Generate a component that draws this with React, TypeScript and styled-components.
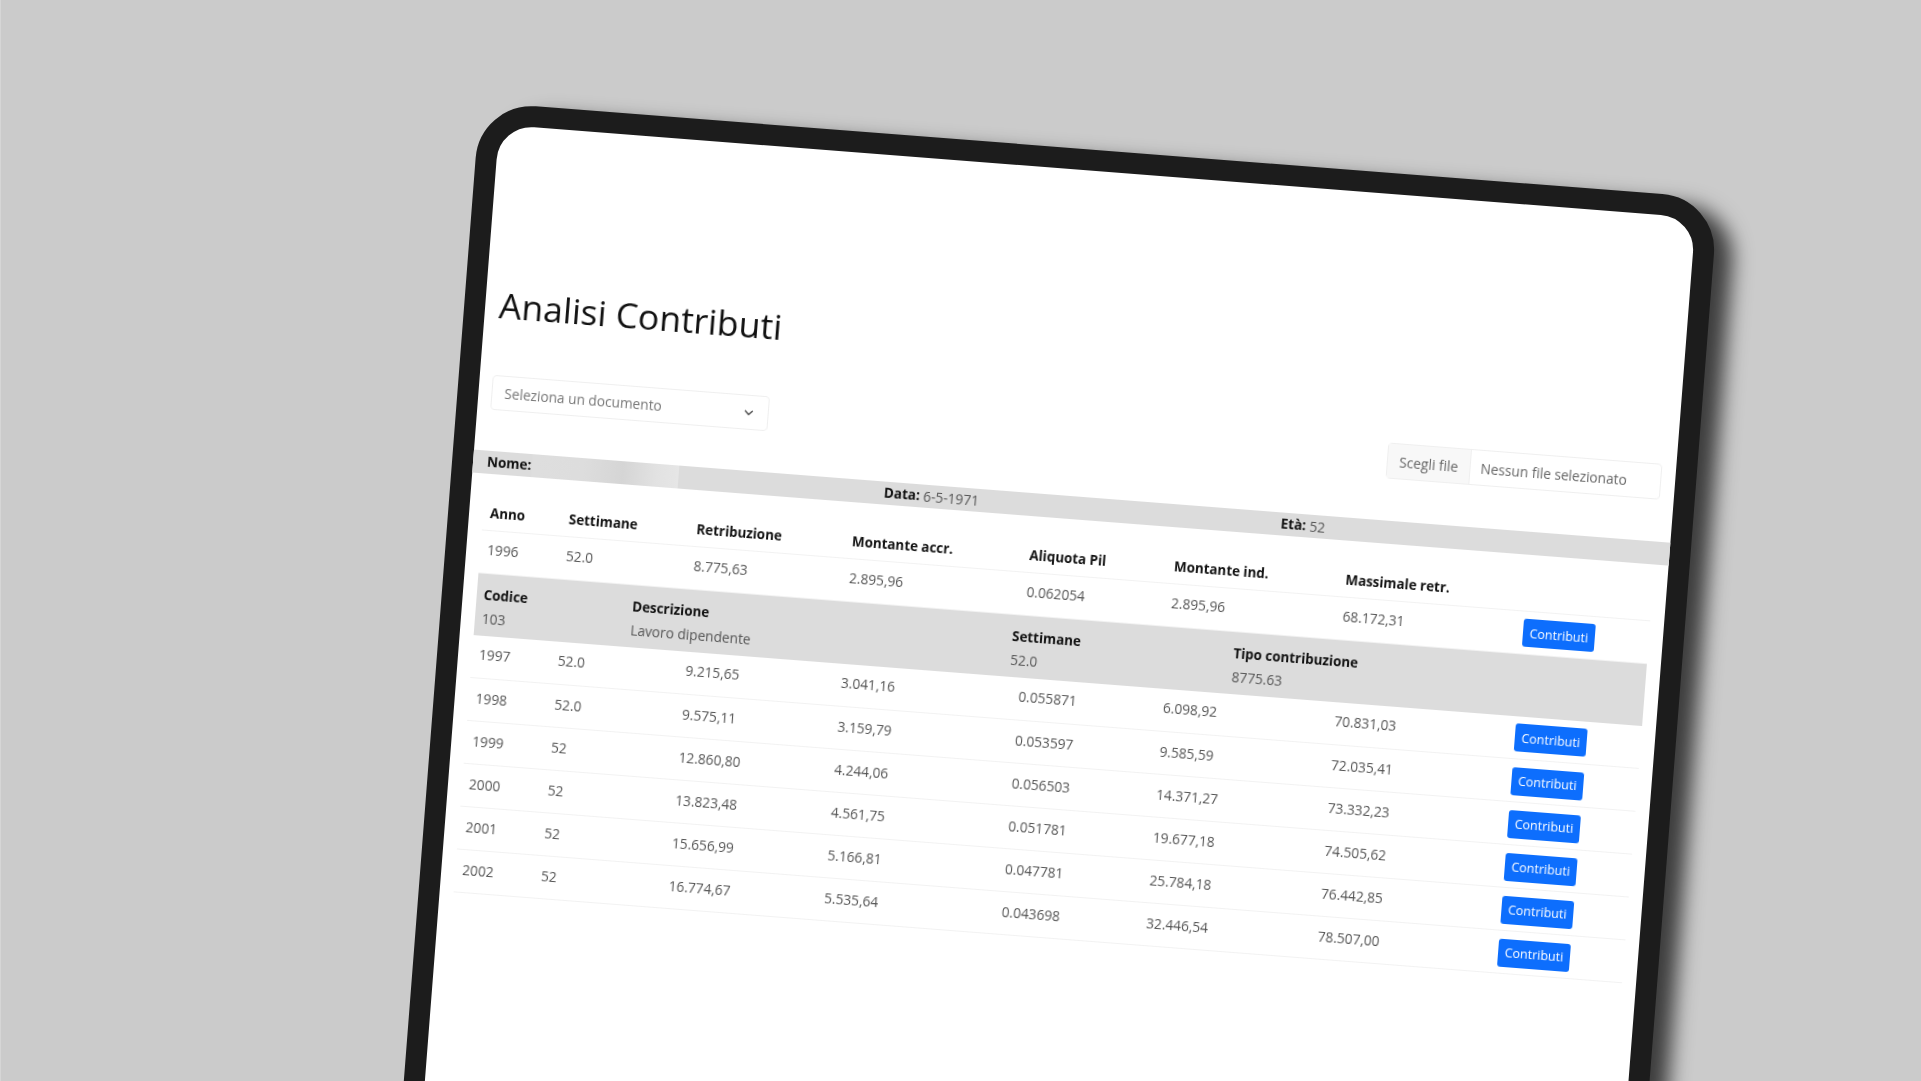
import React from "react";
import styled, { createGlobalStyle } from "styled-components";
import { ChevronDown } from "lucide-react";

const rows = [
  ["1997", "52.0", "9.215,65", "3.041,16", "0.055871", "6.098,92", "70.831,03"],
  ["1998", "52.0", "9.575,11", "3.159,79", "0.053597", "9.585,59", "72.035,41"],
  ["1999", "52", "12.860,80", "4.244,06", "0.056503", "14.371,27", "73.332,23"],
  ["2000", "52", "13.823,48", "4.561,75", "0.051781", "19.677,18", "74.505,62"],
  ["2001", "52", "15.656,99", "5.166,81", "0.047781", "25.784,18", "76.442,85"],
  ["2002", "52", "16.774,67", "5.535,64", "0.043698", "32.446,54", "78.507,00"],
];

const headers = ["Anno", "Settimane", "Retribuzione", "Montante accr.", "Aliquota Pil", "Montante ind.", "Massimale retr."];
const colWidths = [79, 128, 156, 178, 145, 172, 181, 133];

export default function App() {
  return (
    <Stage>
      <GlobalStyle />
      <Tablet>
        <Screen>
          <Title>Analisi Contributi</Title>
          <Toolbar>
            <SelectBox>
              <span>Seleziona un documento</span>
              <ChevronDown size={14} strokeWidth={2.2} color="#444" />
            </SelectBox>
            <FileBox>
              <FileButton>Scegli file</FileButton>
              <FileName>Nessun file selezionato</FileName>
            </FileBox>
          </Toolbar>
          <InfoBand>
            <InfoCell>
              <b>Nome:</b>
              <NameMask />
            </InfoCell>
            <InfoCell>
              <b>Data:</b>&nbsp;6-5-1971
            </InfoCell>
            <InfoCell>
              <b>Età:</b>&nbsp;52
            </InfoCell>
          </InfoBand>
          <Table>
            <colgroup>
              {colWidths.map((w, i) => (
                <col key={i} width={w} />
              ))}
            </colgroup>
            <thead>
              <tr>
                {headers.map((h) => (
                  <HeadCell key={h}>{h}</HeadCell>
                ))}
                <HeadCell />
              </tr>
            </thead>
            <tbody>
              <Row>
                {["1996", "52.0", "8.775,63", "2.895,96", "0.062054", "2.895,96", "68.172,31"].map((v, i) => (
                  <Cell key={i}>{v}</Cell>
                ))}
                <Cell>
                  <BlueButton>Contributi</BlueButton>
                </Cell>
              </Row>
              <tr>
                <DetailCell colSpan={8}>
                  <DetailGrid>
                    <div>
                      <b>Codice</b>
                      <div>103</div>
                    </div>
                    <div>
                      <b>Descrizione</b>
                      <div>Lavoro dipendente</div>
                    </div>
                    <div>
                      <b>Settimane</b>
                      <div>52.0</div>
                    </div>
                    <div>
                      <b>Tipo contribuzione</b>
                      <div>8775.63</div>
                    </div>
                  </DetailGrid>
                </DetailCell>
              </tr>
              {rows.map((r) => (
                <Row key={r[0]}>
                  {r.map((v, i) => (
                    <Cell key={i}>{v}</Cell>
                  ))}
                  <Cell>
                    <BlueButton>Contributi</BlueButton>
                  </Cell>
                </Row>
              ))}
            </tbody>
          </Table>
        </Screen>
      </Tablet>
    </Stage>
  );
}

const GlobalStyle = createGlobalStyle`
  html, body {
    margin: 0;
    padding: 0;
    background: #cbcbcb;
  }
`;

const Stage = styled.div`
  box-sizing: border-box;
  width: 100vw;
  height: 100vh;
  overflow: hidden;
  border-left: 1px solid #d6d6d6;
  background: #cbcbcb;
  font-family: "Open Sans", "Noto Sans", sans-serif;
  font-size: 13.7px;
  color: #333;
`;

// the whole device is tilted, everything inside flows normally
const Tablet = styled.div`
  box-sizing: border-box;
  width: 1242px;
  height: 1320px;
  margin: 102px 0 0 479px;
  border: 21px solid #1c1c1c;
  border-radius: 56px;
  background: #fff;
  transform-origin: 0 0;
  transform: rotate(4.45deg);
  box-shadow: 22px 6px 20px -3px rgba(0, 0, 0, 0.7);
`;

const Screen = styled.div`
  height: 100%;
  border-radius: 35px;
  overflow: hidden;
  padding-top: 156px;
  box-sizing: border-box;
  filter: blur(0.6px);
`;

const Title = styled.h1`
  margin: 0 0 0 14px;
  height: 92px;
  font-size: 35.5px;
  line-height: 46px;
  font-weight: 400;
  color: #111;
`;

const Toolbar = styled.div`
  display: flex;
  justify-content: space-between;
  align-items: flex-start;
  height: 78px;
  padding: 0 14px 0 13px;
`;

const SelectBox = styled.div`
  box-sizing: border-box;
  width: 278px;
  height: 35px;
  margin-top: 2px;
  padding: 0 12px;
  display: flex;
  align-items: center;
  justify-content: space-between;
  border: 1px solid #efefef;
  border-radius: 4px;
  color: #777;
`;

const FileBox = styled.div`
  box-sizing: border-box;
  width: 275px;
  height: 36px;
  display: flex;
  border: 1px solid #efefef;
  border-radius: 4px;
  color: #666;
`;

const FileButton = styled.div`
  width: 82px;
  display: flex;
  align-items: center;
  justify-content: center;
  background: #f8f8f8;
  border-right: 1px solid #efefef;
`;

const FileName = styled.div`
  flex: 1;
  display: flex;
  align-items: center;
  padding-left: 10px;
`;

const InfoBand = styled.div`
  display: grid;
  grid-template-columns: 398px 398px 1fr;
  height: 23px;
  padding-left: 14px;
  background: #dcdcdc;
  line-height: 23px;
  color: #555;

  b {
    color: #111;
    font-size: 13.5px;
    font-weight: 700;
  }
`;

const InfoCell = styled.div`
  display: flex;
`;

// the person's name is smudged out in the reference
const NameMask = styled.div`
  width: 147px;
  height: 23px;
  margin-left: 1px;
  background: linear-gradient(90deg, #dedede, #dddddd 35%, #d5d5d5 62%, #e2e2e2 85%, #e6e6e6);
`;

const Table = styled.table`
  table-layout: fixed;
  width: 1172px;
  margin: 18.5px 0 0 14px;
  border-collapse: collapse;
`;

const HeadCell = styled.th`
  box-sizing: border-box;
  height: 37.5px;
  padding: 4.5px 7px 0;
  text-align: left;
  font-size: 13.4px;
  font-weight: 700;
  color: #111;
  white-space: nowrap;
  border-bottom: 1px solid #f2f2f2;
`;

const Row = styled.tr`
  height: 43px;
`;

const Cell = styled.td`
  padding: 0 7px 4px;
  color: #555;
  white-space: nowrap;
  border-bottom: 1px solid #f2f2f2;
`;

const DetailCell = styled.td`
  padding: 0;
  background: #dcdcdc;
`;

const DetailGrid = styled.div`
  display: grid;
  grid-template-columns: 149px 381px 222px 1fr;
  height: 62px;
  box-sizing: border-box;
  padding: 9px 0 0 7px;
  line-height: 23px;
  color: #555;

  b {
    color: #111;
    font-size: 13.4px;
    font-weight: 700;
  }
`;

const BlueButton = styled.button`
  box-sizing: border-box;
  display: block;
  width: 72px;
  height: 28px;
  margin: 5px 0 0 0;
  padding: 0;
  border: 0;
  border-radius: 3px;
  background: #0d6efd;
  color: #fff;
  font-family: inherit;
  font-size: 12.5px;
`;
